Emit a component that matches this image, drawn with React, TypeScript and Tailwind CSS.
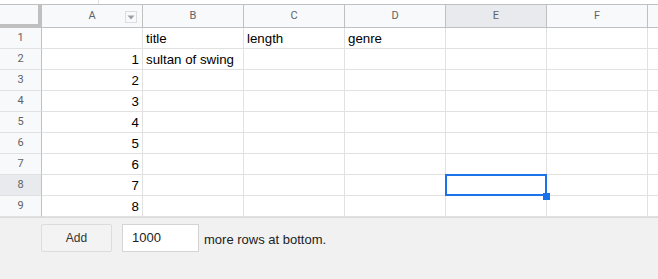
import React from 'react';

const COLS = ['A', 'B', 'C', 'D', 'E', 'F'];

// cell contents by row index (0-based), columns A..D
const ROWS: string[][] = [
  ['', 'title', 'length', 'genre'],
  ['1', 'sultan of swing', '', ''],
  ['2', '', '', ''],
  ['3', '', '', ''],
  ['4', '', '', ''],
  ['5', '', '', ''],
  ['6', '', '', ''],
  ['7', '', '', ''],
  ['8', '', '', ''],
];

const SELECTED_COL = 4; // E
const SELECTED_ROW = 7; // row 8

function FilterIcon() {
  return (
    <div className="absolute right-[5px] top-[6px] w-[12px] h-[12px] border border-[#dadce0] bg-[#f8f9fa] flex items-center justify-center">
      <svg width="8" height="5" viewBox="0 0 8 5">
        <path d="M0.5 0.5 L7.5 0.5 L4 4.5 Z" fill="#9aa0a6" />
      </svg>
    </div>
  );
}

export default function App() {
  return (
    <div
      className="w-[658px] h-[279px] bg-white flex flex-col overflow-hidden"
      style={{ fontFamily: '"Liberation Sans", Arial, sans-serif' }}
    >
      {/* top strip */}
      <div className="h-[4px] relative">
        <div className="absolute left-[98px] top-0 w-px h-[4px] bg-[#e3e3e3]" />
      </div>

      {/* column headers */}
      <div className="flex h-[24px] border-t border-[#c0c0c0] bg-[#f8f9fa]">
        <div className="w-[42px] shrink-0 border-r-4 border-b-4 border-[#c0c0c0] bg-[#f8f9fa]" />
        {COLS.map((c, i) => (
          <div
            key={c}
            className={`relative w-[101px] shrink-0 border-r border-b border-[#c0c0c0] flex items-center justify-center text-[11px] text-[#5f6368] ${
              i === SELECTED_COL ? 'bg-[#e8eaed]' : 'bg-[#f8f9fa]'
            }`}
            style={{ fontFamily: 'Roboto, "Liberation Sans", sans-serif' }}
          >
            {c}
            {i === 0 && <FilterIcon />}
          </div>
        ))}
        <div className="flex-1 border-b border-[#c0c0c0]" />
      </div>

      {/* rows */}
      {ROWS.map((row, r) => (
        <div key={r} className="flex h-[21px]">
          <div
            className={`w-[42px] shrink-0 border-r border-b border-r-[#c0c0c0] border-b-[#e1e1e1] flex items-center justify-center text-[11px] text-[#5f6368] ${
              r === SELECTED_ROW ? 'bg-[#e8eaed]' : 'bg-[#f8f9fa]'
            }`}
            style={{ fontFamily: 'Roboto, "Liberation Sans", sans-serif' }}
          >
            {r + 1}
          </div>
          {COLS.map((c, i) => {
            const val = row[i] ?? '';
            const isNum = val !== '' && !isNaN(Number(val));
            const isSel = r === SELECTED_ROW && i === SELECTED_COL;
            return (
              <div
                key={c}
                className={`relative w-[101px] shrink-0 border-r border-b border-[#e1e1e1] flex items-end pb-[1px] px-[3px] text-[13.3px] leading-[16px] text-black whitespace-nowrap ${
                  isNum ? 'justify-end' : 'justify-start'
                } ${isSel ? 'z-10' : ''}`}
              >
                {val}
                {isSel && (
                  <>
                    <div className="absolute left-[-1px] top-[-1px] w-[102px] h-[22px] border-2 border-[#1a73e8]" />
                    <div className="absolute left-[97px] top-[18px] w-[7px] h-[7px] bg-[#1a73e8] z-20" />
                  </>
                )}
              </div>
            );
          })}
          <div className="flex-1 border-b border-[#e1e1e1]" />
        </div>
      ))}

      {/* add rows footer */}
      <div className="flex-1 bg-[#f1f1f1] border-t border-[#dadada] flex items-start pt-[6px] pl-[41px]">
        <button className="w-[71px] h-[28px] rounded-[2px] border border-[#dcdcdc] bg-[#f3f3f3] text-[12px] text-[#333] flex items-center justify-center">
          Add
        </button>
        <div className="ml-[10px] w-[77px] h-[28px] border border-[#d4d4d4] bg-white text-[13px] text-[#222] flex items-center pl-[9px]">
          1000
        </div>
        <span className="ml-[5px] h-[28px] flex items-center pt-[3px] text-[13px] text-[#222]">
          more rows at bottom.
        </span>
      </div>
    </div>
  );
}
